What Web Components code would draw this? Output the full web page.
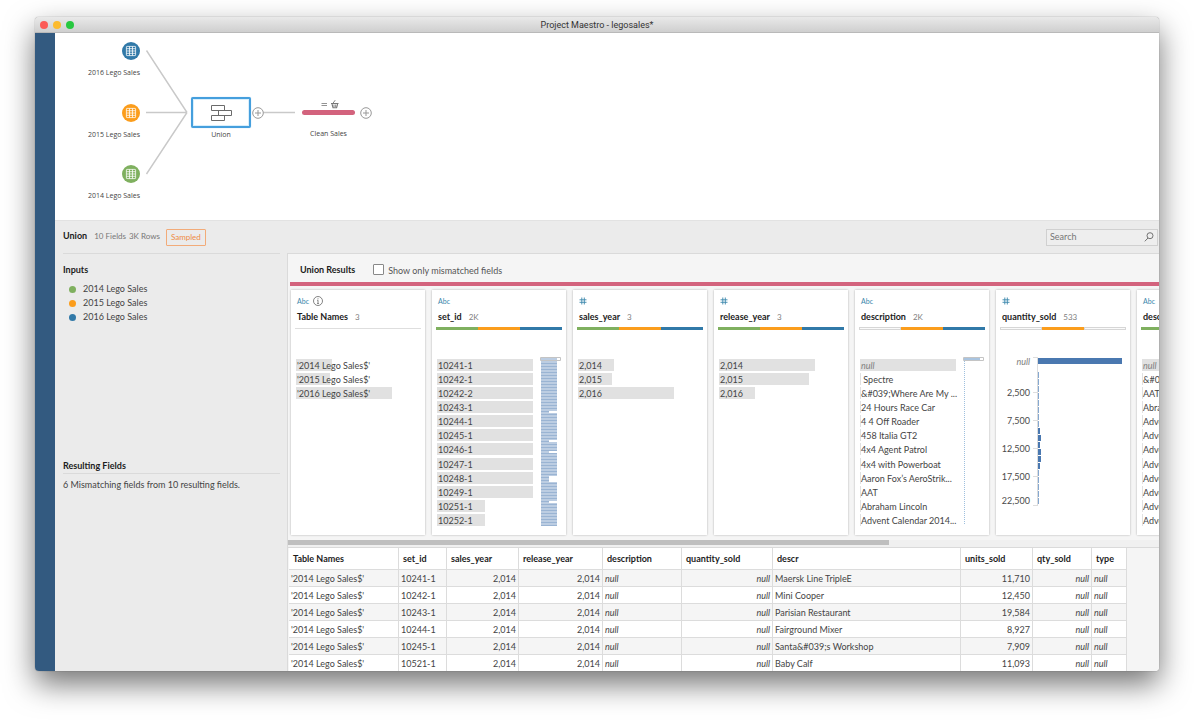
<!DOCTYPE html>
<html lang="en">
<head>
<meta charset="utf-8">
<title>Project Maestro - legosales</title>
<style>
  :root {
    --green: #7fb05f; --orange: #fb9d1c; --blue: #3179a8; --pink: #d3637d;
    --line: #dadada; --muted: #777;
  }
  body { margin: 0; background: #fff; font: 9px/14px Lato, "Open Sans", sans-serif; color: #444; }
</style>
</head>
<body>
<maestro-app></maestro-app>
<script>
const define = (name, html, setup) => {
  const template = document.createElement('template');
  template.innerHTML = html;
  customElements.define(name, class extends HTMLElement {
    connectedCallback() {
      if (this.shadowRoot) return;
      const root = this.attachShadow({ mode: 'open' });
      root.append(template.content.cloneNode(true));
      if (setup) setup(this, root);
    }
  });
};
const esc = s => s.replace(/&/g, '&amp;').replace(/</g, '&lt;');

/* Window frame with traffic lights and a title */
define('mac-window', `
<style>
  :host { display: flex; flex-direction: column; min-height: 0; overflow: hidden; border-radius: 4px;
    box-shadow: 0 13px 30px rgba(0,0,0,.55), 0 0 1px rgba(0,0,0,.6); background: #ebebeb; }
  header { flex: none; box-sizing: border-box; height: 16px; display: grid; grid-template-columns: 1fr auto 1fr; align-items: center;
    padding: 0 5px; background: linear-gradient(#e9e9e9, #cfcfcf); border-bottom: 1px solid #b9b9b9; }
  .lights { display: flex; gap: 5px; }
  button { width: 8px; height: 8px; padding: 0; border: 0; border-radius: 50%; background: #fc5b57; }
  button:nth-child(2) { background: #fcbb2f; }
  button:nth-child(3) { background: #28c840; }
  h1 { margin: 0; font: 9px/14px Roboto, sans-serif; color: #333; }
  .body { flex: 1; min-height: 0; display: grid; grid-template-columns: 20px minmax(0, 1fr); }
  .rail { background: #335a80; }
  .main { display: flex; flex-direction: column; min-height: 0; }
</style>
<header>
  <div class="lights"><button aria-label="Close"></button><button aria-label="Minimize"></button><button aria-label="Zoom"></button></div>
  <h1><slot name="title"></slot></h1>
</header>
<div class="body"><nav class="rail" aria-label="Connections"></nav><div class="main"><slot></slot></div></div>
`);

/* A data source on the flow canvas */
define('source-node', `
<style>
  :host { position: absolute; }
  button { all: unset; display: flex; flex-direction: column; align-items: flex-end; gap: 6px; font: 7px/14px "Open Sans", sans-serif; white-space: nowrap; }
  svg { display: block; }
</style>
<button>
  <svg width="18" height="18" viewBox="0 0 18 18" aria-hidden="true">
    <circle cx="9" cy="9" r="9"/>
    <g fill="none" stroke="#fff" stroke-width=".9" stroke-opacity=".85"><rect x="4.4" y="4.4" width="9.2" height="9.2" rx=".5"/>
    <path d="M7.5 4.4v9.2M10.5 4.4v9.2M4.4 6.7h9.2M4.4 9h9.2M4.4 11.3h9.2"/></g>
  </svg>
  <span><slot></slot></span>
</button>
`, (el, root) => root.querySelector('circle').setAttribute('fill', el.getAttribute('color')));

define('add-step', `
<style>
  :host { position: absolute; }
  button { all: unset; display: block; }
  svg { display: block; }
</style>
<button aria-label="Add step"><svg width="12" height="12" viewBox="0 0 12 12" fill="none" stroke="#999">
  <circle cx="6" cy="6" r="5.3" fill="#fff"/><path d="M6 3v6M3 6h6"/></svg></button>
`);

/* Flow canvas: every step sits at its own spot */
define('flow-canvas', `
<style>
  :host { display: block; position: relative; flex: none; height: 187px; background: #fff; overflow: hidden; }
  .links { position: absolute; left: 0; top: 0; }
  .step { all: unset; position: absolute; display: flex; flex-direction: column; align-items: center; font: 7px/14px "Open Sans", sans-serif; white-space: nowrap; }
  .union { left: 136px; top: 64px; }
  .clean { left: 247px; top: 66px; gap: 12px; }
  .box { box-sizing: border-box; width: 60px; height: 31px; display: grid; place-items: center; border: 2px solid #459fdd; border-radius: 2px;
    background: #fff; box-shadow: inset 0 0 0 1px #d9effc, 0 0 1px #8bc4ee; }
  .bar { width: 53px; height: 5px; border-radius: 3px; background: var(--pink); }
  .clean .top { display: flex; flex-direction: column; align-items: center; gap: 1px; }
  svg { display: block; }
</style>
<svg class="links" width="260" height="187" fill="none" stroke="#c9c9c9" stroke-width="1.4">
  <path d="M91.500 17.500 132 79.500M91 79.500H132M91.500 141 132 79.500M207 79.500h33"/></svg>
<source-node color="#3179a8" style="right:calc(100% - 85px);top:9px">2016 Lego Sales</source-node>
<source-node color="#fb9d1c" style="right:calc(100% - 85px);top:71px">2015 Lego Sales</source-node>
<source-node color="#7fb05f" style="right:calc(100% - 85px);top:132px">2014 Lego Sales</source-node>
<button class="step union"><span class="box"><svg width="22" height="18" viewBox="0 0 22 18" fill="#fff" stroke="#6b6b6b">
  <path d="M1.500 1.500h13v5h-13zM8.500 6.500h13v5h-13zM1.500 11.500h13v5h-13z"/></svg></span><span>Union</span></button>
<add-step style="left:197px;top:74px"></add-step>
<button class="step clean"><span class="top"><svg width="22" height="10" viewBox="0 0 22 10" fill="none" stroke="#777">
  <path d="M3.500 4.500h5.500M3.500 6.500h5.500" stroke-width=".8"/><path d="M13 4.500h7.500M14 5l1 3.700h3.600l1-3.700" stroke-width="1.1"/><path d="M15 4.200 17.200 1.200M16 5.500v2.500M17.700 5.500v2.500" stroke-width=".9"/></svg>
  <span class="bar"></span></span><span>Clean Sales</span></button>
<add-step style="left:305px;top:74px"></add-step>
`);

/* Strip that names the selected step and holds the search box */
define('step-toolbar', `
<style>
  :host { flex: none; display: flex; align-items: center; height: 33px; padding: 0 1px 0 8px; font-size: 8px; color: var(--muted); border-top: 1px solid #e2e2e2; box-sizing: border-box; }
  h2 { margin: 0 7px 2px 0; font-size: 9px; line-height: 14px; font-weight: 700; color: #1c1c1c; }
  span { margin: 0 3px 2px 0; }
  .tag { margin: 0 auto 0 3px; padding: 0 4px; line-height: 15px; border: 1px solid #f2ab79; border-radius: 1px; color: #ef8b45; }
  label { display: flex; align-items: center; box-sizing: border-box; width: 112px; height: 17px; padding: 0 3px; border: 1px solid #d0d0d0; background: #eee; }
  input { flex: 1; min-width: 0; padding: 0; border: 0; outline: 0; background: none; font: inherit; font-size: 9px; color: #444; }
  input::placeholder { color: #777; opacity: 1; }
</style>
<h2>Union</h2><span>10 Fields</span><span>3K Rows</span><span class="tag">Sampled</span>
<label><input type="search" placeholder="Search" aria-label="Search">
<svg width="10" height="10" viewBox="0 0 10 10" fill="none" stroke="#666" stroke-width=".9"><circle cx="6" cy="3.700" r="3"/><path d="M4 6 .8 9.300"/></svg></label>
`);

define('inputs-panel', `
<style>
  :host { display: block; padding: 0 7px 0 8px; font-size: 9px; line-height: 14px; }
  .inputs { border-top: 1px solid var(--line); min-height: 205px; padding-top: 9px; box-sizing: border-box; }
  h3 { margin: 0; font-size: 9px; line-height: 14px; color: #1c1c1c; font-weight: 700; }
  ul { list-style: none; margin: 5px 0 0; padding: 0 0 0 6px; }
  li { display: flex; align-items: center; gap: 7px; }
  i { width: 7px; height: 7px; border-radius: 50%; background: var(--c); }
  .result h3 { border-bottom: 1px solid var(--line); line-height: 15px; }
  p { margin: 4px 0 0; }
</style>
<section class="inputs"><h3>Inputs</h3><ul>
  <li style="--c:var(--green)"><i></i>2014 Lego Sales</li>
  <li style="--c:var(--orange)"><i></i>2015 Lego Sales</li>
  <li style="--c:var(--blue)"><i></i>2016 Lego Sales</li></ul></section>
<section class="result"><h3>Resulting Fields</h3><p>6 Mismatching fields from 10 resulting fields.</p></section>
`);

/* Profile card of one field; the distribution is slotted in */
define('field-card', `
<style>
  :host { flex: none; display: block; box-sizing: border-box; width: 134px; height: 245px; background: #fff; box-shadow: 0 0 2px rgba(0,0,0,.28); }
  .type { display: flex; align-items: center; gap: 4px; height: 14px; padding: 4px 6px 0; font-size: 7px; color: #3a87ab; }
  .name { display: flex; align-items: center; gap: 7px; padding: 2px 6px 0; white-space: nowrap; }
  h4 { margin: 0; font-size: 9px; line-height: 14px; font-weight: 700; color: #1c1c1c; }
  .name span { font-size: 8px; color: #808080; }
  .seg { display: grid; grid-template-columns: repeat(3, 1fr); height: 3px; margin: 3px 4px 29px 4px; }
  .seg i { background: var(--c); }
  .seg .off { box-shadow: inset 0 0 0 1px #d6d6d6; background: #fafafa; }
  .seg.plain { background: linear-gradient(#fff 1px, #dedede 1px, #dedede 2px, #fff 2px); }
  svg { display: block; }
</style>
<div class="type"></div><div class="name"><h4></h4><span></span></div><div class="seg"></div><slot></slot>
`, (el, root) => {
  const $ = s => root.querySelector(s);
  $('.type').innerHTML = (el.getAttribute('type') === 'number'
    ? '<svg width="8" height="8" viewBox="0 0 8 8" stroke="#3a87ab" stroke-width=".9" role="img" aria-label="Number"><path d="M2.800 .5v7M5.300 .5v7M.5 2.800h7M.5 5.300h7"/></svg>'
    : '<b style="font-weight:400">Abc</b>')
    + (el.hasAttribute('info') ? '<svg width="10" height="10" viewBox="0 0 10 10" fill="none" stroke="#666" stroke-width=".8"><circle cx="5" cy="5" r="4.500"/><path d="M5 4.200v3.300M5 2.300v1M4.200 4.300H5M4.100 7.500h1.800"/></svg>' : '');
  $('h4').textContent = el.getAttribute('name');
  $('.name span').textContent = el.getAttribute('count') || '';
  const seg = el.getAttribute('sources');
  const colors = { g: 'var(--green)', o: 'var(--orange)', b: 'var(--blue)' };
  if (!seg) $('.seg').classList.add('plain');
  else $('.seg').innerHTML = [...seg].map(c => c === '-' ? '<i class="off"></i>' : `<i style="--c:${colors[c]}"></i>`).join('');
});

/* Values with a grey frequency bar behind each: "text|width" rows */
const lists = {
  tables: ["'2014 Lego Sales$'|36", "'2015 Lego Sales$'|34", "'2016 Lego Sales$'|96"],
  set: ['10241-1|96', '10242-1|96', '10242-2|96', '10243-1|96', '10244-1|96', '10245-1|96', '10246-1|96', '10247-1|96', '10248-1|96', '10249-1|96', '10251-1|48', '10252-1|48'],
  sales: ['2,014|36', '2,015|34', '2,016|96'],
  release: ['2,014|96', '2,015|90', '2,016|36'],
  description: ['null|96', '\u00a0Spectre|1', '&#039;Where Are My ...|1', '24 Hours Race Car|1', '4 4 Off Roader|1', '458 Italia GT2|1', '4x4 Agent Patrol|1', '4x4 with Powerboat|1', 'Aaron Fox\u2019s AeroStrik...|1', 'AAT|1', 'Abraham Lincoln|1', 'Advent Calendar 2014...|1'],
  descr: ['null|96', '&#039;|1', 'AAT|1', 'Abra|1', ...Array(8).fill('Adve|1')]
};
const stripes = Array.from({ length: 56 }, (_, i) => `M0 ${i * 3 + 2.5}h16`).join('');
const maps = {
  set: `<svg width="22" height="170" viewBox="0 0 22 170"><g transform="translate(1 1)"><path fill="#bccde2" d="M0 0h16v168H0z"/>
    <path stroke="#9ab4d3" d="${stripes}"/><path fill="#fff" d="M8 53h9v2H8zM8 82h9v2H8zM8 93h9v2H8zM8 118h9v6H8zM8 143h9v2H8z"/></g>
    <path d="M.5.5h20v3H.5z" fill="none" stroke="#c4c4c4"/></svg>`,
  description: `<svg width="22" height="170" viewBox="0 0 22 170"><path fill="#a9c4e0" d="M1 1h16v2H1z"/>
    <path d="M.5.5h20v3H.5z" fill="none" stroke="#c4c4c4"/><path d="M1.500 4v163" stroke="#9fc0de" stroke-dasharray="1 1"/></svg>`
};
define('value-bars', `
<style>
  :host { display: flex; gap: 7px; margin-left: 5px; }
  ul { list-style: none; margin: 0; padding: 0; width: 96px; display: grid; grid-auto-rows: 12px; gap: 2px; line-height: 13px; white-space: nowrap; }
  ul.full { gap: 0; height: 167px; align-content: space-between; }
  li { padding-left: 1px; background: linear-gradient(#e1e1e1, #e1e1e1) 0 0 / var(--w) 100% no-repeat; }
  em { color: #808080; }
  svg { display: block; margin-top: -2px; }
</style>
<ul></ul>
`, (el, root) => {
  const key = el.getAttribute('list');
  const ul = root.querySelector('ul');
  ul.classList.toggle('full', lists[key].length > 3);
  ul.innerHTML = lists[key].map(r => {
    const [t, w] = r.split('|');
    return `<li style="--w:${w}px">${t === 'null' ? '<em>null</em>' : esc(t)}</li>`;
  }).join('');
  if (maps[key]) ul.insertAdjacentHTML('afterend', maps[key]);
});

/* Binned distribution of a numeric field */
define('value-histogram', `
<style>
  :host { display: block; margin-top: -3px; }
  svg { display: block; font-size: 9px; fill: #4a4a4a; }
  text { text-anchor: end; }
</style>
<svg width="134" height="152" viewBox="0 0 134 152"></svg>
`, (el, root) => {
  const widths = [1, 1, 1, 1, 1, 1, 1, 1, 2, 3, 2, 3, 3, 2, 1, 1, 1, 1, 1];
  const labels = [['2,500', 40], ['7,500', 68], ['12,500', 96], ['17,500', 124], ['22,500', 148]];
  root.querySelector('svg').innerHTML =
    '<text x="34" y="9" font-style="italic" fill="#808080">null</text><path fill="#4a78b0" d="M42 2h84v6H42z"/>' +
    '<path stroke="#ddd" d="M37 1.500h5M37 149.500h5M41.500 2v148"/>' +
    labels.map(([t, y]) => `<text x="34" y="${y}">${t}</text>` + (y < 140 ? `<path stroke="#ddd" d="M37 ${y - 3.5}h4"/>` : '')).join('') +
    widths.map((w, i) => `<path fill="${w > 1 ? '#4a78b0' : '#86a8d0'}" d="M42 ${16 + i * 7}h${w}v6h-${w}z"/>`).join('');
});

define('data-grid', `
<style>
  :host { display: block; padding-left: 1px; background: #f5f5f5; border-top: 1px solid var(--line); }
  table { table-layout: fixed; width: 838px; border-collapse: separate; border-spacing: 0; background: #fff; white-space: nowrap; }
  th, td { box-sizing: border-box; border-right: 1px solid #dcdcdc; border-bottom: 1px solid #dcdcdc; overflow: hidden; font-size: 9px; }
  th { height: 22px; padding: 0 4px; line-height: 14px; text-align: left; color: #1c1c1c; }
  td { height: 17px; padding: 1px 2px 0; line-height: 14px; }
  tr:nth-child(odd) td { background: #f5f5f5; }
  .n { text-align: right; }
</style>
<table><colgroup></colgroup><thead><tr></tr></thead><tbody></tbody></table>
`, (el, root) => {
  const cols = [['Table Names', 110], ['set_id', 48], ['sales_year', 72, 1], ['release_year', 84, 1], ['description', 79], ['quantity_sold', 91, 1], ['descr', 188], ['units_sold', 72, 1], ['qty_sold', 59, 1], ['type', 35]];
  const rows = [['10241-1', 'Maersk Line TripleE', '11,710'], ['10242-1', 'Mini Cooper', '12,450'], ['10243-1', 'Parisian Restaurant', '19,584'],
    ['10244-1', 'Fairground Mixer', '8,927'], ['10245-1', 'Santa&#039;s Workshop', '7,909'], ['10521-1', 'Baby Calf', '11,093']];
  root.querySelector('colgroup').innerHTML = cols.map(c => `<col style="width:${c[1]}px">`).join('');
  root.querySelector('thead tr').innerHTML = cols.map(c => `<th scope="col">${c[0]}</th>`).join('');
  root.querySelector('tbody').innerHTML = rows.map(([id, d, u]) =>
    '<tr>' + ["'2014 Lego Sales$'", id, '2,014', '2,014', 'null', 'null', d, u, 'null', 'null'].map((v, i) =>
      `<td${cols[i][2] ? ' class="n"' : ''}>${v === 'null' ? '<em>null</em>' : esc(v)}</td>`).join('') + '</tr>').join('');
});

define('results-panel', `
<style>
  :host { display: block; min-width: 0; overflow: hidden; background: #f5f5f5; border-top: 1px solid var(--line); border-left: 1px solid var(--line); }
  header { display: flex; align-items: center; gap: 18px; height: 28px; padding: 3px 0 0 12px; box-sizing: border-box; }
  h3 { margin: 0; font-size: 9px; line-height: 14px; color: #1c1c1c; font-weight: 700; }
  label { display: flex; align-items: center; gap: 4px; padding-top: 2px; color: #555; }
  input { appearance: none; box-sizing: border-box; width: 11px; height: 11px; margin: -2px 0 0; border: 1px solid #888; border-radius: 1px; background: #fff; }
  .accent { height: 4px; margin-left: 2px; background: var(--pink); }
  .cards { display: flex; gap: 7px; padding: 4px 0 5px 3px; overflow: hidden; }
  .scroll { height: 7px; background: #f0f0f0; }
  .thumb { width: 69%; height: 5px; background: #bfbfbf; }
</style>
<header><h3>Union Results</h3><label><input type="checkbox">Show only mismatched fields</label></header>
<div class="accent"></div>
<div class="cards">
  <field-card type="text" name="Table Names" count="3" info><value-bars list="tables"></value-bars></field-card>
  <field-card type="text" name="set_id" count="2K" sources="gob"><value-bars list="set"></value-bars></field-card>
  <field-card type="number" name="sales_year" count="3" sources="gob"><value-bars list="sales"></value-bars></field-card>
  <field-card type="number" name="release_year" count="3" sources="gob"><value-bars list="release"></value-bars></field-card>
  <field-card type="text" name="description" count="2K" sources="-ob"><value-bars list="description"></value-bars></field-card>
  <field-card type="number" name="quantity_sold" count="533" sources="-o-"><value-histogram></value-histogram></field-card>
  <field-card type="text" name="descr" sources="g--"><value-bars list="descr"></value-bars></field-card>
</div>
<div class="scroll"><div class="thumb"></div></div>
<data-grid></data-grid>
`);

define('maestro-app', `
<style>
  :host { display: grid; box-sizing: border-box; height: 100vh; padding: 17px 35px 50px; overflow: hidden; }
  .work { flex: 1; min-height: 0; display: grid; grid-template-columns: 232px minmax(0, 1fr); }
</style>
<mac-window>
  <span slot="title">Project Maestro - legosales*</span>
  <flow-canvas></flow-canvas>
  <step-toolbar></step-toolbar>
  <div class="work"><inputs-panel></inputs-panel><results-panel></results-panel></div>
</mac-window>
`);
</script>
</body>
</html>
